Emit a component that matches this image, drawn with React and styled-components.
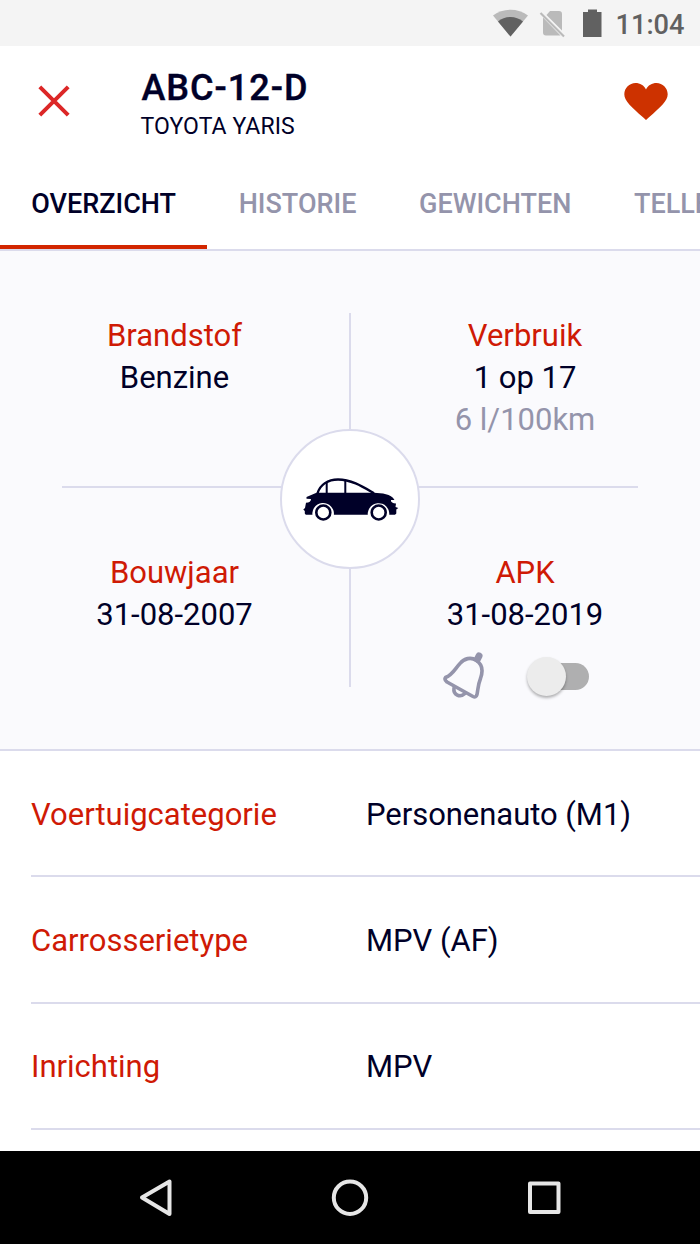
import React from 'react';
import styled, { createGlobalStyle } from 'styled-components';

const ink = '#000028';
const red = '#cf1a05';
const muted = '#9494ab';
const line = '#dbdbec';

const GlobalStyle = createGlobalStyle`
  * { box-sizing: border-box; }
  body { margin: 0; background: #fff; }
`;

const Screen = styled.div`
  width: 700px;
  height: 1244px;
  display: flex;
  flex-direction: column;
  overflow: hidden;
  background: #fff;
  color: ${ink};
  font-family: Roboto, sans-serif;
`;

const StatusBar = styled.div`
  height: 46px;
  flex: none;
  display: flex;
  align-items: center;
  justify-content: flex-end;
  padding: 3px 15.5px 0 0;
  background: #f4f4f4;
  color: #616161;
  font-size: 27.2px;
  font-weight: 500;
  svg { display: block; }
`;

const StatusIcons = styled.svg`
  margin: -3px 13.5px 0 0;
`;

const Clock = styled.span`
  line-height: 32px;
`;

const Header = styled.header`
  height: 111px;
  flex: none;
  display: flex;
  padding: 0 31.5px 0 37px;
`;

const CloseIcon = styled.svg`
  margin-top: 38px;
  width: 34px;
  height: 34px;
`;

const Titles = styled.div`
  flex: 1;
  margin-left: 69.5px;
  padding-top: 20px;
  white-space: nowrap;
`;

const Plate = styled.h1`
  margin: 0 0 0 1px;
  font-size: 36px;
  line-height: 44px;
  font-weight: 500;
  letter-spacing: 1px;
  -webkit-text-stroke: 0.4px ${ink};
`;

const Model = styled.div`
  margin-top: 3px;
  font-size: 23px;
  line-height: 28px;
  letter-spacing: 0.1px;
`;

const HeartIcon = styled.svg`
  margin-top: 36px;
  width: 46px;
  height: 40px;
`;

const Tabs = styled.nav`
  height: 94px;
  flex: none;
  display: flex;
  border-bottom: 2px solid ${line};
  overflow: hidden;
`;

const Tab = styled.div`
  flex: none;
  height: 92px;
  padding: 31px 31.3px 0;
  font-size: 27px;
  line-height: 32px;
  font-weight: 500;
  white-space: nowrap;
  color: ${p => (p.$active ? ink : muted)};
  border-bottom: 4px solid ${p => (p.$active ? '#d22600' : 'transparent')};
`;

const Overview = styled.section`
  position: relative;
  height: 500px;
  flex: none;
  display: grid;
  grid-template-columns: 349px 351px;
  grid-template-rows: 237px 261px;
  background: #fafafd;
  border-bottom: 2px solid ${line};
  &::before, &::after {
    content: '';
    position: absolute;
    background: ${line};
  }
  &::before { left: 349px; top: 62px; width: 2px; height: 374px; }
  &::after { left: 62px; top: 235px; width: 576px; height: 2px; }
`;

const Fact = styled.div`
  padding-top: 64px;
  padding-left: ${p => (p.$right ? 1 : 0)}px;
  text-align: center;
  font-size: 31px;
  line-height: 42px;
`;

const FactLabel = styled.div`
  color: ${red};
`;

const FactNote = styled.div`
  color: ${muted};
`;

const CarBadge = styled.div`
  position: absolute;
  z-index: 1;
  left: 280px;
  top: 178px;
  width: 140px;
  height: 140px;
  padding-top: 2px;
  border: 2px solid ${line};
  border-radius: 50%;
  background: #fff;
  display: flex;
  align-items: center;
  justify-content: center;
`;

const Reminder = styled.div`
  display: flex;
  align-items: center;
  height: 50px;
  margin: 15px 0 0 93px;
`;

const Switch = styled.div`
  width: 62px;
  height: 40px;
  margin-left: 42px;
  padding: 7px 0 6px 16px;
  position: relative;
  &::before {
    content: '';
    display: block;
    height: 27px;
    border-radius: 14px;
    background: #afafb0;
  }
  &::after {
    content: '';
    position: absolute;
    left: 0;
    top: 0.5px;
    width: 39px;
    height: 39px;
    border-radius: 50%;
    background: #ececec;
    box-shadow: 0 2px 3px rgba(0, 0, 0, 0.3);
  }
`;

const Details = styled.dl`
  margin: 0;
  flex: 1;
  min-height: 0;
`;

const Row = styled.div`
  display: flex;
  align-items: center;
  height: 126.3px;
  margin-left: 31px;
  padding-top: 3px;
  border-bottom: 2px solid ${line};
  font-size: 31px;
  line-height: 42px;
`;

const Term = styled.dt`
  width: 335px;
  color: ${red};
`;

const Value = styled.dd`
  margin: 0;
  letter-spacing: -0.04px;
`;

const NavBar = styled.footer`
  height: 93px;
  flex: none;
  display: flex;
  justify-content: space-between;
  align-items: center;
  padding: 0 135px 0 136px;
  background: #000;
  svg { fill: none; stroke: #e6e6e6; stroke-width: 4; stroke-linejoin: round; }
`;

const rows = [
  ['Voertuigcategorie', 'Personenauto (M1)'],
  ['Carrosserietype', 'MPV (AF)'],
  ['Inrichting', 'MPV'],
];

const tabs = ['OVERZICHT', 'HISTORIE', 'GEWICHTEN', 'TELLERSTAND'];

function Car() {
  return (
    <svg width="100" height="46" viewBox="300 476.500 100 46">
      <path d="M317.500 493C320 484 328 479 338 479C352 479 364 487 374 492.800" fill="none" stroke={ink} strokeWidth="2.400" />
      <path d="M326.700 482V493M345.300 480V493" stroke={ink} strokeWidth="2" />
      <path d="M306.500 496.500L316.500 492.300H374C382 493 391 493 394.500 499.500H391Q390.500 502.500 396 503L395.500 506.500L398.300 507.500L396.300 509V513L395 514.300H305.800L304.800 513V510.500L303.300 509L305 507.500L306 502.300Q311 502 311 498.500L306.500 498.300Z" fill={ink} />
      <path d="M313 517A10.800 10.800 0 1 1 333.800 515ZM368.300 517A10.800 10.800 0 1 1 389.200 515Z" fill="#fff" />
      <circle cx="323.300" cy="512" r="7" fill="none" stroke={ink} strokeWidth="2.600" />
      <circle cx="378.700" cy="512" r="7" fill="none" stroke={ink} strokeWidth="2.600" />
    </svg>
  );
}

function Bell() {
  return (
    <svg width="42" height="50" viewBox="443 650.500 42 50" fill="none" stroke={muted} strokeWidth="3.6" strokeLinecap="round" strokeLinejoin="round">
      <path d="M445.500 677C453 674 455 668 460 663C464 658 471 656 476.500 660C482.500 664 483 671 480.500 678C478 684 478 689 477 694Q476 697.500 473 696L447 681.500Q444 679 445.500 677Z" />
      <path d="M454 687.500C453 694.500 460 697.500 465 693" />
      <path d="M477.500 658.500L479 655.500" strokeWidth="7" />
    </svg>
  );
}

export default function App() {
  return (
    <Screen>
      <GlobalStyle />
      <StatusBar>
        <StatusIcons width="109" height="32" viewBox="493 7 109 32">
          <path d="M493 15.500C503 7.800 518 7.800 528 15.500L510.500 36.500Z" fill="#bababa" />
          <path d="M498 21.500C505 15.500 516 15.500 523 21.500L510.500 36.500Z" fill="#616161" />
          <path d="M550 11H559Q562 11 562 14V30.500L546.500 15ZM543 17.500L560.500 35.500H546Q543 35.500 543 32.500Z" fill="#bababa" />
          <path d="M540.500 13L564 36.500" stroke="#bababa" strokeWidth="2.200" />
          <path d="M583 12H588V9.500H597V12H601.500V37H583Z" fill="#616161" />
        </StatusIcons>
        <Clock>11:04</Clock>
      </StatusBar>
      <Header>
        <CloseIcon viewBox="0 0 34 34">
          <path d="M2.800 2.800L31.200 31.200M31.200 2.800L2.800 31.200" stroke="#dc2727" strokeWidth="4" />
        </CloseIcon>
        <Titles>
          <Plate>ABC-12-D</Plate>
          <Model>TOYOTA YARIS</Model>
        </Titles>
        <HeartIcon viewBox="0 0 46 40">
          <path d="M23 38L20 35.300C8.500 25 1.300 19 1.300 12.200C1.300 6 6.500 1 12.500 1C17 1 21 3.300 23 7.500C25 3.300 29 1 33.500 1C39.500 1 44.700 6 44.700 12.200C44.700 19 37.500 25 26 35.300Z" fill="#cd3200" />
        </HeartIcon>
      </Header>
      <Tabs>
        {tabs.map((t, i) => <Tab key={t} $active={i === 0}>{t}</Tab>)}
      </Tabs>
      <Overview>
        <Fact>
          <FactLabel>Brandstof</FactLabel>
          <div>Benzine</div>
        </Fact>
        <Fact $right>
          <FactLabel>Verbruik</FactLabel>
          <div>1 op 17</div>
          <FactNote>6 l/100km</FactNote>
        </Fact>
        <Fact>
          <FactLabel>Bouwjaar</FactLabel>
          <div>31-08-2007</div>
        </Fact>
        <Fact $right>
          <FactLabel>APK</FactLabel>
          <div>31-08-2019</div>
          <Reminder>
            <Bell />
            <Switch />
          </Reminder>
        </Fact>
        <CarBadge><Car /></CarBadge>
      </Overview>
      <Details>
        {rows.map(([k, v]) => (
          <Row key={k}>
            <Term>{k}</Term>
            <Value>{v}</Value>
          </Row>
        ))}
      </Details>
      <NavBar>
        <svg width="38" height="40" viewBox="0 0 38 40"><path d="M33.500 3.500V36L6 19.500Z" /></svg>
        <svg width="40" height="40" viewBox="0 0 40 40"><circle cx="20" cy="19.700" r="16.200" /></svg>
        <svg width="40" height="40" viewBox="0 0 40 40"><rect x="5" y="5.500" width="28.500" height="28.500" /></svg>
      </NavBar>
    </Screen>
  );
}
